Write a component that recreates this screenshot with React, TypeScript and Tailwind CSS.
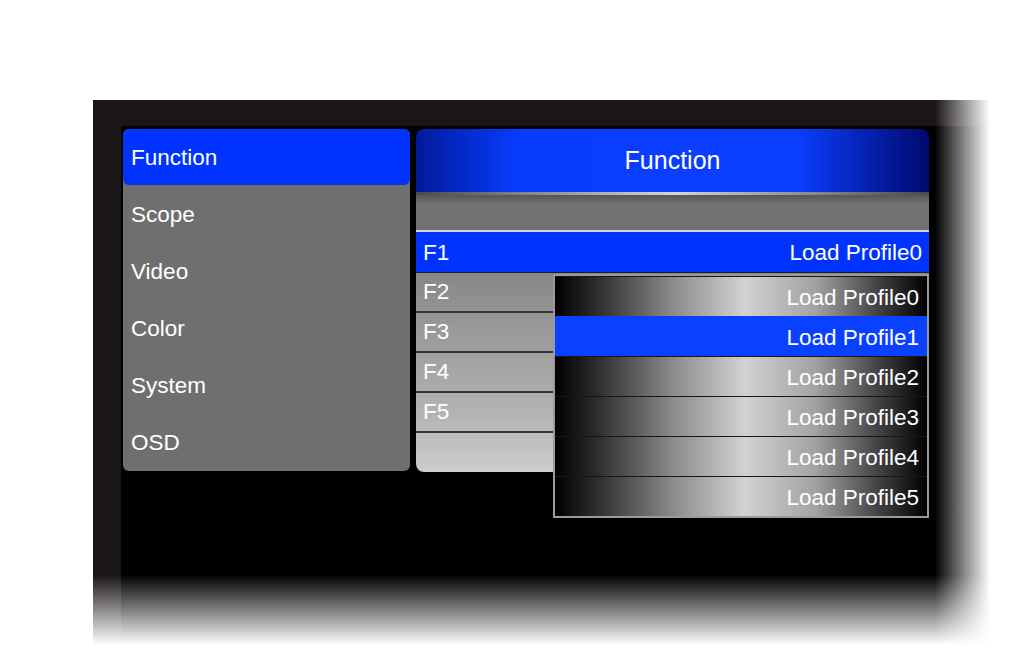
const menu = ['Scope', 'Video', 'Color', 'System', 'OSD'];
const keys = ['F2', 'F3', 'F4', 'F5'];
const profiles = [0, 1, 2, 3, 4, 5];

export default function App() {
  return (
    <div className="w-[1024px] h-[662px] bg-white pt-[100px] pl-[93px] overflow-hidden font-['Liberation_Sans',Arial,sans-serif] text-white">
      {/* monitor frame */}
      <div className="relative w-[897px] h-[545px] bg-black border-t-[26px] border-l-[28px] border-[#1b1616] pt-[3px] pl-[2px]">
        <div className="flex gap-[6px] items-start">
          {/* left menu */}
          <div className="w-[287px] h-[342px] bg-[#6f6f6f] rounded-[6px] flex flex-col">
            <div className="h-[56px] bg-[#0033ff] rounded-[6px] flex items-center pl-[8px] pt-[2px] text-[22.5px]">
              Function
            </div>
            {menu.map((m) => (
              <div key={m} className="h-[57px] flex items-center pl-[8px] pt-[2px] text-[22.5px]">
                {m}
              </div>
            ))}
          </div>

          {/* right panel */}
          <div className="relative w-[513px] h-[343px] flex flex-col">
            <div className="h-[63px] rounded-t-[8px] bg-[linear-gradient(to_right,#001a9a_0%,#0a3cff_20%,#0b3eff_74%,#00096e_100%)] flex items-center justify-center text-[25px]">
              Function
            </div>
            <div className="h-[3px] bg-[linear-gradient(to_right,#4a4a4a,#d6d6d6_50%,#4a4a4a)]" />
            <div className="h-[35px] bg-[linear-gradient(to_bottom,#565656,#717171_25%,#717171)]" />
            <div className="h-[2px] bg-[#d4d4d4]" />
            <div className="h-[41px] bg-[#0033ff] border-b border-[#1a1a2a] flex items-center justify-between pl-[7px] pr-[7px] pt-[2px] text-[22.5px]">
              <span>F1</span>
              <span>Load Profile0</span>
            </div>
            <div className="flex-1 flex flex-col rounded-bl-[8px] bg-[linear-gradient(to_bottom,#878787,#b3b3b3_70%,#cdcdcd)]">
              {keys.map((k) => (
                <div key={k} className="h-[40px] border-b-2 border-[#333333] flex items-center pl-[7px] text-[22.5px]">
                  {k}
                </div>
              ))}
              <div className="flex-1" />
            </div>

            {/* dropdown */}
            <div className="absolute left-[137px] top-[145px] w-[376px] h-[244px] border-2 border-[#9a9a9a] flex flex-col">
              {profiles.map((p) => (
                <div
                  key={p}
                  className={
                    p === 1
                      ? 'h-[40px] bg-[#0a40ff] flex items-center justify-end pr-[8px] pt-[3px] text-[22.5px]'
                      : 'h-[40px] border-t border-[#161616] bg-[linear-gradient(to_right,#000000_0%,#303030_12%,#8c8c8c_32%,#d2d2d2_51%,#a2a2a2_70%,#3c3c3c_88%,#000000_100%)] flex items-center justify-end pr-[8px] pt-[2px] text-[22.5px]'
                  }
                >
                  Load Profile{p}
                </div>
              ))}
            </div>
          </div>
        </div>

        {/* soft fade on right and bottom edge */}
        <div className="absolute -top-[26px] right-0 bottom-0 w-[55px] bg-[linear-gradient(to_right,rgba(255,255,255,0),#ffffff)]" />
        <div className="absolute -left-[28px] right-0 bottom-0 h-[70px] bg-[linear-gradient(to_bottom,rgba(255,255,255,0),#ffffff)]" />
      </div>
    </div>
  );
}
